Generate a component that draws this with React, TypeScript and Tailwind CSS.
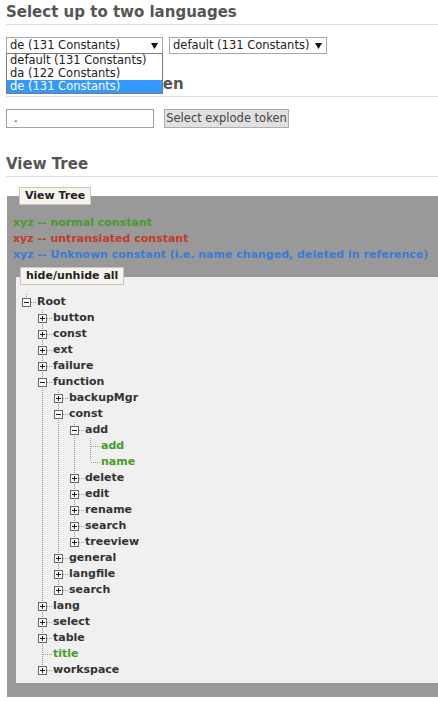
import React from "react";

type TreeNode = {
  label: string;
  open?: boolean;
  leaf?: boolean;
  children?: TreeNode[];
};

const closed = (label: string): TreeNode => ({ label, children: [] });
const leaf = (label: string): TreeNode => ({ label, leaf: true });

const tree: TreeNode = {
  label: "Root",
  open: true,
  children: [
    closed("button"),
    closed("const"),
    closed("ext"),
    closed("failure"),
    {
      label: "function",
      open: true,
      children: [
        closed("backupMgr"),
        {
          label: "const",
          open: true,
          children: [
            { label: "add", open: true, children: [leaf("add"), leaf("name")] },
            closed("delete"),
            closed("edit"),
            closed("rename"),
            closed("search"),
            closed("treeview"),
          ],
        },
        closed("general"),
        closed("langfile"),
        closed("search"),
      ],
    },
    closed("lang"),
    closed("select"),
    closed("table"),
    leaf("title"),
    closed("workspace"),
  ],
};

type Row = { node: TreeNode; lines: boolean[]; last: boolean };

// Walk the open branches into flat rows, remembering which ancestor columns keep a line
const flatten = (node: TreeNode, lines: boolean[], last: boolean, out: Row[]) => {
  out.push({ node, lines, last });
  if (node.open && node.children) {
    node.children.forEach((child, i) => {
      flatten(child, [...lines, !last], i === node.children!.length - 1, out);
    });
  }
  return out;
};

const DOT = "#9a9a9a";

// Ancestor column: a dotted vertical line or nothing
const LineCell = ({ on }: { on: boolean }) => (
  <svg width="16" height="16" className="shrink-0">
    {on && <line x1="6.5" y1="0" x2="6.5" y2="16" stroke={DOT} strokeDasharray="1 1" />}
  </svg>
);

// Own column: join lines plus the +/- box when the node has children
const JoinCell = ({ node, last }: { node: TreeNode; last: boolean }) => (
  <svg width="16" height="16" className="shrink-0">
    <line x1="6.5" y1="0" x2="6.5" y2={last ? 8 : 16} stroke={DOT} strokeDasharray="1 1" />
    <line x1="7" y1="8.5" x2="16" y2="8.5" stroke={DOT} strokeDasharray="1 1" />
    {!node.leaf && (
      <>
        <rect x="2.5" y="4.5" width="8" height="8" fill="#fafafa" stroke="#666" />
        <line x1="4" y1="8.5" x2="9" y2="8.5" stroke="#111" />
        {!node.open && <line x1="6.5" y1="6" x2="6.5" y2="11" stroke="#111" />}
      </>
    )}
  </svg>
);

const Arrow = () => (
  <svg width="7" height="6" viewBox="0 0 7 6" className="shrink-0">
    <polygon points="0,0 7,0 3.5,6" fill="#111" />
  </svg>
);

const Heading = ({ children, className = "" }: { children: React.ReactNode; className?: string }) => (
  <h2 className={`border-b border-[#dcdcdc] text-[15px] font-bold text-[#555] ${className}`}>{children}</h2>
);

const App = () => {
  const rows = flatten(tree, [], true, []);

  return (
    <div className="min-h-screen bg-white pl-[6px] font-['DejaVu_Sans',Verdana,sans-serif] text-[#222]">
      <Heading className="h-[25px] leading-6">Select up to two languages</Heading>

      <div className="mt-3 flex h-[17px] gap-[6px] text-[11.5px]">
        <div className="relative w-[157px]">
          <div className="flex h-[17px] items-center justify-between border border-[#a6a6a6] bg-white pl-[3px] pr-[4px]">
            <span>de (131 Constants)</span>
            <Arrow />
          </div>
          {/* open option list of the first select */}
          <div className="absolute left-0 top-[16px] z-10 w-full border border-[#7a7a7a] bg-white leading-[13px]">
            <div className="pl-[3px]">default (131 Constants)</div>
            <div className="pl-[3px]">da (122 Constants)</div>
            <div className="bg-[#3399ff] pl-[3px] text-white">de (131 Constants)</div>
          </div>
        </div>
        <div className="flex h-[17px] w-[158px] items-center justify-between border border-[#a6a6a6] bg-white pl-[3px] pr-[4px]">
          <span>default (131 Constants)</span>
          <Arrow />
        </div>
      </div>

      <Heading className="mt-[19px] h-6 leading-[23px]">Select explode token</Heading>

      <div className="mt-3 flex gap-[10px] text-[11.5px]">
        <div className="flex h-[19px] w-[148px] items-center border border-[#a0a0a0] bg-white pl-[7px]">.</div>
        <button className="h-[19px] w-[125px] border border-[#adadad] bg-[#e1e1e1] text-[#444]">
          Select explode token
        </button>
      </div>

      <Heading className="mt-6 h-[25px] leading-6">View Tree</Heading>

      <div className="ml-[1px] mt-[19px] flex flex-col items-start bg-[#999999] pb-[14px] pl-[6px] text-[11px] font-bold">
        <div className="-mt-[9px] ml-[6px] flex h-[18px] items-center border border-[#c9c6bb] bg-[#f6f4ec] px-[5px] text-[#222]">
          View Tree
        </div>

        <div className="mt-[10px] leading-4">
          <div className="text-[#4a9a2c]">xyz -- normal constant</div>
          <div className="text-[#c23a2b]">xyz -- untranslated constant</div>
          <div className="text-[#3b7bd4]">xyz -- Unknown constant (i.e. name changed, deleted in reference)</div>
        </div>

        <div className="ml-[3px] mt-[14px] flex flex-col items-start self-stretch bg-[#f0f0f0] pb-[5px] pl-[4px]">
          <div className="-mt-[10px] flex h-[18px] items-center border border-[#c9c6bb] bg-[#f6f4ec] px-[5px] text-[#222]">
            hide/unhide all
          </div>

          <div className="mt-[9px]">
            {rows.map((row, i) => (
              <div key={i} className="flex h-4 items-center">
                {row.lines.map((on, j) => (
                  <LineCell key={j} on={on} />
                ))}
                <JoinCell node={row.node} last={row.last} />
                <span className={`ml-[1px] leading-4 ${row.node.leaf ? "text-[#4a9a2c]" : "text-[#333]"}`}>
                  {row.node.label}
                </span>
              </div>
            ))}
          </div>
        </div>
      </div>
    </div>
  );
};

export default App;
